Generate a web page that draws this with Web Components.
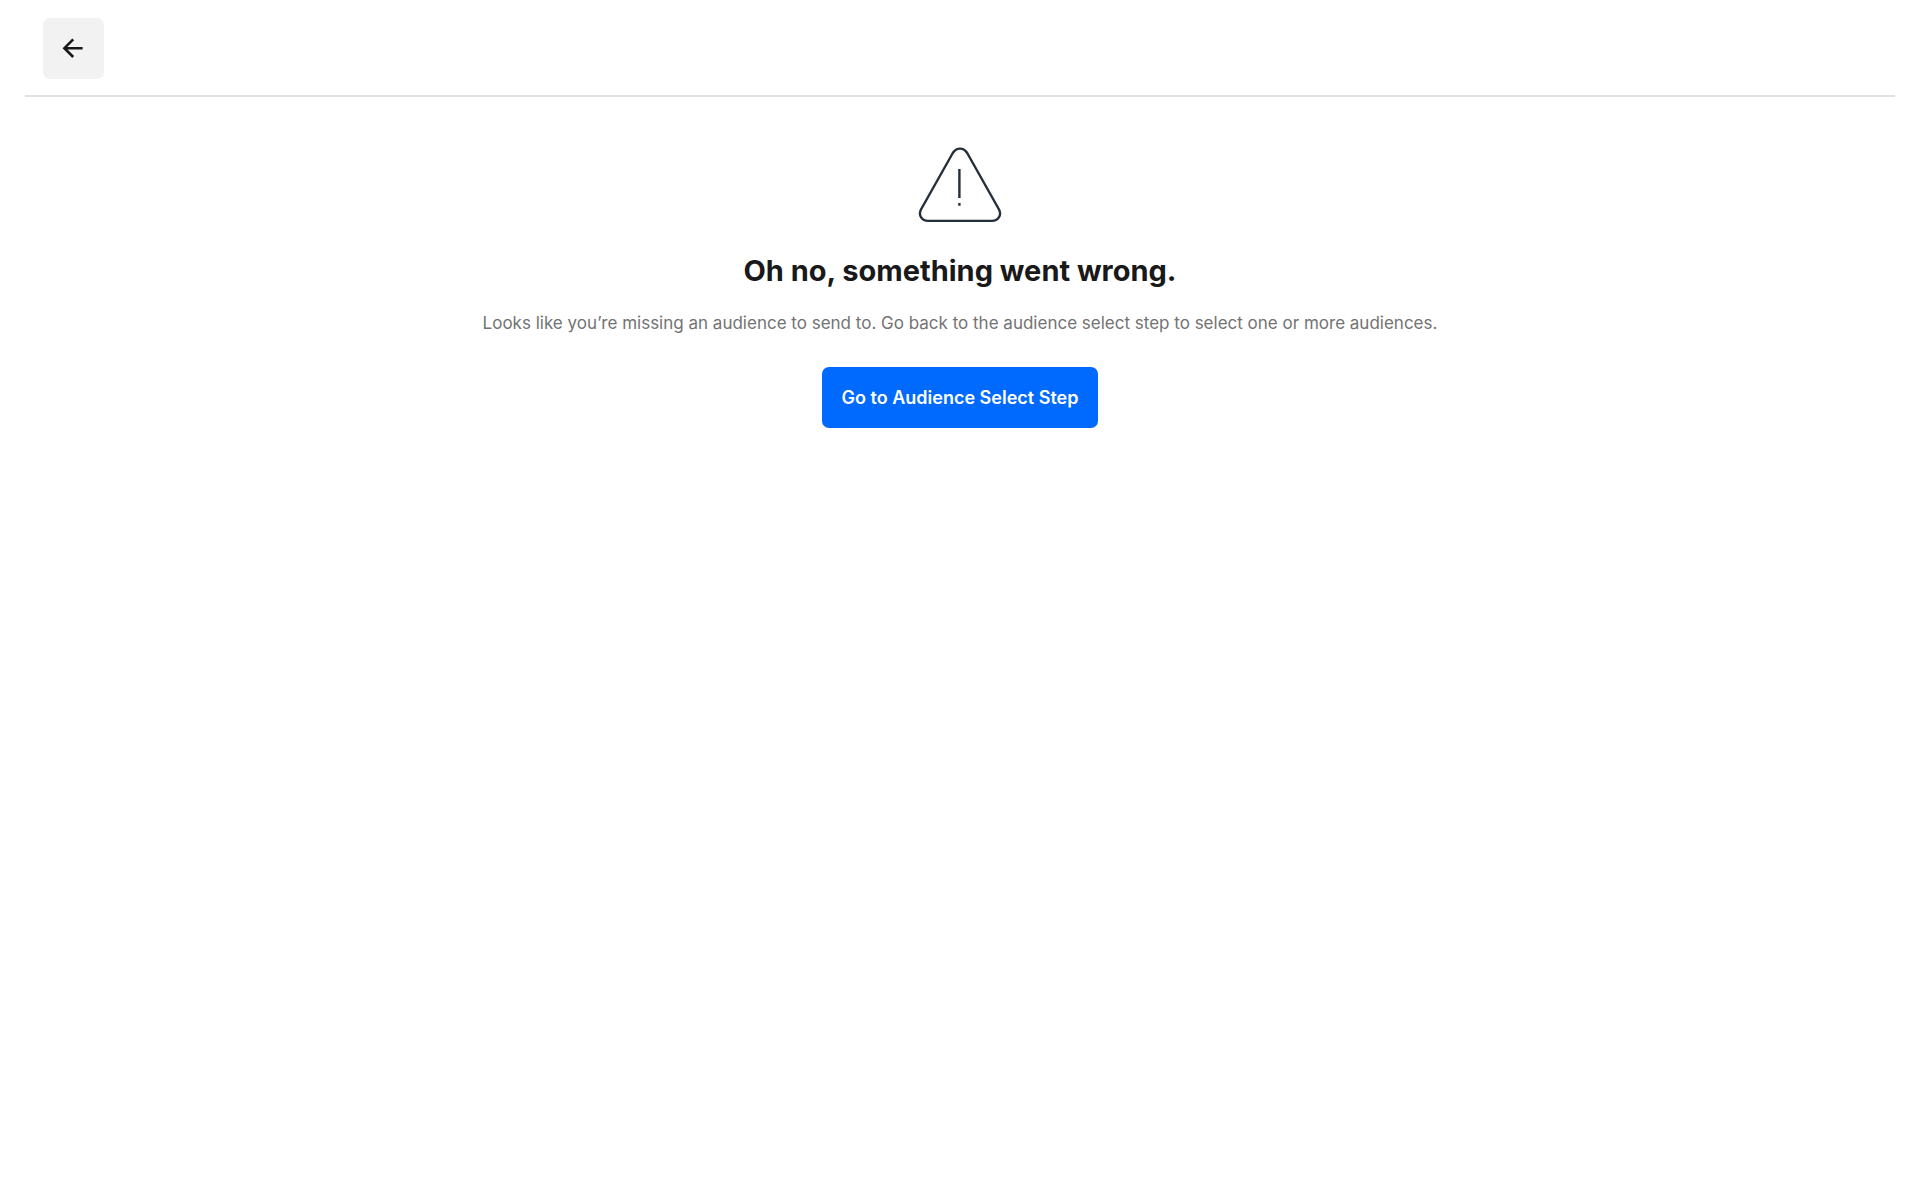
<!DOCTYPE html>
<html lang="en">
<head>
<meta charset="utf-8">
<meta name="viewport" content="width=device-width, initial-scale=1">
<title>Something went wrong</title>
<style>
  body {
    margin: 0;
    background: #fff;
    color: #191919;
    font-family: Inter, "Liberation Sans", sans-serif;
  }
</style>
</head>
<body>
<checkout-page>
  <back-button slot="header"></back-button>
  <error-state>
    <span slot="title">Oh no, something went wrong.</span>
    <span slot="message">Looks like you’re missing an audience to send to. Go back to the audience select step to select one or more audiences.</span>
    <primary-button slot="action">Go to Audience Select Step</primary-button>
  </error-state>
</checkout-page>

<script>
class CheckoutPage extends HTMLElement {
  constructor() {
    super();

    const template = `
  <style>
    :host {
      display: block;
      padding: 0 25px;
    }

    header {
      display: flex;
      padding: 18px 18px 16px;
      border-bottom: 2px solid #e2e2e2;
    }

    main {
      padding-top: 50px;
    }
  </style>
  <header><slot name="header"></slot></header>
  <main><slot></slot></main>
`;

    const shadowRoot = this.attachShadow({mode: 'open'});
    shadowRoot.innerHTML = template;
  }
}

class BackButton extends HTMLElement {
  constructor() {
    super();

    const template = `
  <style>
    :host {
      display: block;
    }

    button {
      display: flex;
      align-items: center;
      justify-content: center;
      width: 61px;
      height: 61px;
      padding: 0;
      border: 0;
      border-radius: 7px;
      background: #f2f2f2;
      color: #191919;
      cursor: pointer;
    }
  </style>
  <button type="button" aria-label="Back">
    <svg width="31" height="31" viewBox="0 0 31 31" fill="none" stroke="currentColor" stroke-width="2.6" aria-hidden="true">
      <path d="M24.6 15.2H7M15.2 6.4L6.4 15.2L15.2 24"/>
    </svg>
  </button>
`;

    const shadowRoot = this.attachShadow({mode: 'open'});
    shadowRoot.innerHTML = template;
  }
}

class PrimaryButton extends HTMLElement {
  constructor() {
    super();

    const template = `
  <style>
    :host {
      display: block;
    }

    button {
      height: 61px;
      padding: 0 20px;
      border: 0;
      border-radius: 7px;
      background: #006aff;
      color: #fff;
      font: inherit;
      font-size: 18px;
      font-weight: 600;
      cursor: pointer;
    }
  </style>
  <button type="button"><slot></slot></button>
`;

    const shadowRoot = this.attachShadow({mode: 'open'});
    shadowRoot.innerHTML = template;
  }
}

class ErrorState extends HTMLElement {
  constructor() {
    super();

    const template = `
  <style>
    :host {
      display: flex;
      flex-direction: column;
      align-items: center;
      text-align: center;
    }

    h1 {
      margin: 28px 0 0;
      font-size: 29px;
      font-weight: 700;
      line-height: 40px;
    }

    p {
      margin: 18px 0 30px;
      color: #737373;
      font-size: 17px;
      line-height: 28px;
    }
  </style>
  <svg width="84" height="76" viewBox="0 0 84 76" fill="none" stroke="#232f3a" stroke-width="2.4" aria-hidden="true">
    <path d="M34.8 6C38.4 .1 45.6 .1 49.2 6L81 62.5C84 68.3 80 73.9 74 73.9H10C4 73.9 0 68.3 3 62.5Z"/>
    <path d="M41.4 22V51M41.4 56V58.8"/>
  </svg>
  <h1><slot name="title"></slot></h1>
  <p><slot name="message"></slot></p>
  <slot name="action"></slot>
`;

    const shadowRoot = this.attachShadow({mode: 'open'});
    shadowRoot.innerHTML = template;
  }
}

window.customElements.define('checkout-page', CheckoutPage);
window.customElements.define('back-button', BackButton);
window.customElements.define('primary-button', PrimaryButton);
window.customElements.define('error-state', ErrorState);
</script>
</body>
</html>
